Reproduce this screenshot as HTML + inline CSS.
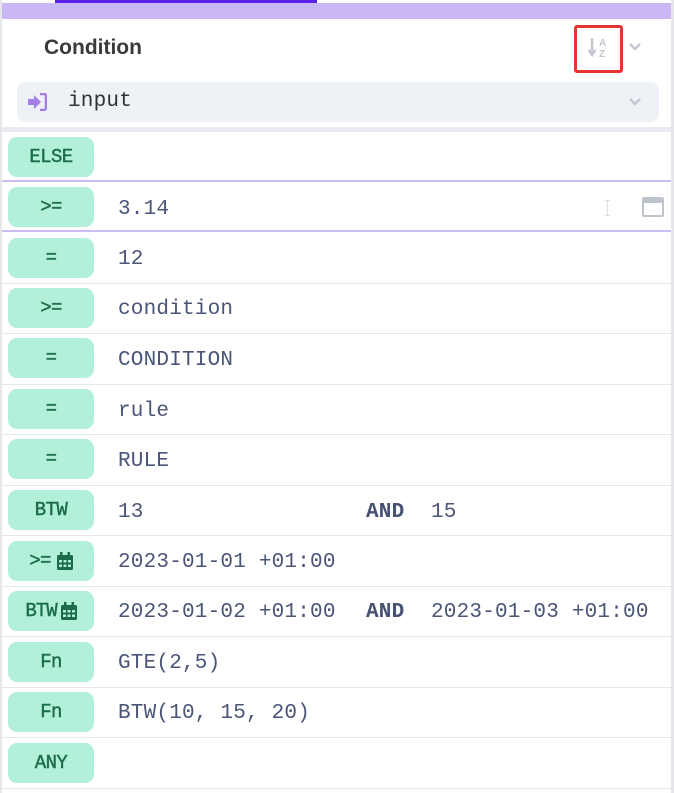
<!DOCTYPE html>
<html><head><style>
*{margin:0;padding:0;box-sizing:border-box}
body{width:674px;height:793px;background:#fff;position:relative;overflow:hidden;font-family:"Liberation Sans",sans-serif}
.frame{position:absolute;left:0;top:0;width:674px;height:793px;border-left:2px solid #e5e7eb;border-right:3px solid #e5e7eb}
.topbar{position:absolute;left:55px;top:0;width:262px;height:3px;background:#5b21e6}
.lav{position:absolute;left:2px;top:3px;width:669px;height:16px;background:#c9b8f5}
.title{position:absolute;left:44px;top:36px;font-size:21px;font-weight:bold;color:#3a3a3a}
.sortbox{position:absolute;left:574px;top:25px;width:49px;height:48px;border:3px solid #e53535;border-radius:3px}
.sel{position:absolute;left:17px;top:82px;width:642px;height:40px;background:#eef1f6;border-radius:8px}
.sep{position:absolute;left:2px;top:127px;width:669px;height:5px;background:#e8ebf0}
.row{position:absolute;left:2px;width:669px;border-bottom:1px solid #e5e7eb}
.pill{position:absolute;left:6px;width:86px;height:40px;background:#b2f0d9;border-radius:9px;color:#1b6b4c;font-family:"Liberation Mono",monospace;font-size:19px;letter-spacing:-0.6px;display:flex;align-items:center;justify-content:center;-webkit-text-stroke:0.4px #1b6b4c}
.v{position:absolute;font-family:"Liberation Mono",monospace;font-size:21px;color:#4a5578;letter-spacing:0.2px;white-space:pre;margin-top:2px}
.and{font-weight:bold;color:#465070}
</style></head><body>
<div class="frame"></div>
<div class="topbar"></div>
<div class="lav"></div>
<div class="title">Condition</div>
<div class="sortbox"></div>
<svg style="position:absolute;left:588px;top:36px" width="22" height="24" viewBox="0 0 22 24"><path d="M4 2v16M0.5 14l3.5 5 3.5-5" stroke="#c4c8cf" stroke-width="2.5" fill="none"/><text x="11" y="10" font-size="10" font-weight="bold" fill="#c4c8cf" font-family="Liberation Sans">A</text><text x="11" y="21" font-size="10" font-weight="bold" fill="#c4c8cf" font-family="Liberation Sans">Z</text></svg>
<svg style="position:absolute;left:628px;top:42px" width="14" height="10"><path d="M2 2l5 5 5-5" stroke="#c4c8cf" stroke-width="2.5" fill="none"/></svg>
<div class="sel"></div>
<svg style="position:absolute;left:27px;top:93px" width="20" height="18" viewBox="0 0 20 18"><path d="M1 6h6V2l7 7-7 7v-4H1z" fill="#a47de8"/><path d="M13 1h4a2 2 0 0 1 2 2v12a2 2 0 0 1-2 2h-4" stroke="#a47de8" stroke-width="2.5" fill="none"/></svg>
<div class="v" style="left:68px;top:88px;color:#333">input</div>
<svg style="position:absolute;left:628px;top:97px" width="14" height="10"><path d="M2 2l5 5 5-5" stroke="#c4c8cf" stroke-width="2.5" fill="none"/></svg>
<div class="sep"></div>

<div class="row" style="top:132px;height:50px;border-bottom:2px solid #cbbdf3"><div class="pill" style="top:5px">ELSE</div></div>
<div class="row" style="top:184px;height:48px;border-bottom:2px solid #cbbdf3"><div class="pill" style="top:3px">&gt;=</div><div class="v" style="left:116px;top:12px">3.14</div>
<div style="position:absolute;left:603px;top:16px;width:5px;height:16px;border:1px solid #ddd;border-left:none;border-right:none"></div><div style="position:absolute;left:605px;top:16px;width:1px;height:16px;background:#e0e0e0"></div>
<div style="position:absolute;left:640px;top:13px;width:22px;height:20px;border:2px solid #bfc3ca;border-top-width:6px;border-radius:2px"></div></div>

<div class="row" style="top:233px;height:51px"><div class="pill" style="top:5px">=</div><div class="v" style="left:116px;top:13px">12</div></div>
<div class="row" style="top:284px;height:50px"><div class="pill" style="top:4px">&gt;=</div><div class="v" style="left:116px;top:12px">condition</div></div>
<div class="row" style="top:334px;height:51px"><div class="pill" style="top:4px">=</div><div class="v" style="left:116px;top:13px">CONDITION</div></div>
<div class="row" style="top:385px;height:50px"><div class="pill" style="top:4px">=</div><div class="v" style="left:116px;top:13px">rule</div></div>
<div class="row" style="top:435px;height:51px"><div class="pill" style="top:4px">=</div><div class="v" style="left:116px;top:13px">RULE</div></div>
<div class="row" style="top:486px;height:50px"><div class="pill" style="top:4px">BTW</div><div class="v" style="left:116px;top:13px">13</div><div class="v and" style="left:364px;top:13px">AND</div><div class="v" style="left:429px;top:13px">15</div></div>
<div class="row" style="top:536px;height:51px"><div class="pill" style="top:5px">&gt;=<svg width="16" height="18" viewBox="0 0 16 18" style="margin-left:6px"><rect x="0" y="3" width="16" height="15" rx="1.5" fill="#1b6b4c"/><rect x="3" y="0" width="2.5" height="4" fill="#1b6b4c"/><rect x="10.5" y="0" width="2.5" height="4" fill="#1b6b4c"/><g fill="#b2f0d9"><rect x="2" y="8" width="3" height="2.5"/><rect x="6.5" y="8" width="3" height="2.5"/><rect x="11" y="8" width="3" height="2.5"/><rect x="2" y="12.5" width="3" height="2.5"/><rect x="6.5" y="12.5" width="3" height="2.5"/><rect x="11" y="12.5" width="3" height="2.5"/></g></svg></div><div class="v" style="left:116px;top:13px">2023-01-01 +01:00</div></div>
<div class="row" style="top:587px;height:50px"><div class="pill" style="top:4px;letter-spacing:-1px">BTW<svg width="16" height="18" viewBox="0 0 16 18" style="margin-left:4px"><rect x="0" y="3" width="16" height="15" rx="1.5" fill="#1b6b4c"/><rect x="3" y="0" width="2.5" height="4" fill="#1b6b4c"/><rect x="10.5" y="0" width="2.5" height="4" fill="#1b6b4c"/><g fill="#b2f0d9"><rect x="2" y="8" width="3" height="2.5"/><rect x="6.5" y="8" width="3" height="2.5"/><rect x="11" y="8" width="3" height="2.5"/><rect x="2" y="12.5" width="3" height="2.5"/><rect x="6.5" y="12.5" width="3" height="2.5"/><rect x="11" y="12.5" width="3" height="2.5"/></g></svg></div><div class="v" style="left:116px;top:12px">2023-01-02 +01:00</div><div class="v and" style="left:364px;top:12px">AND</div><div class="v" style="left:429px;top:12px">2023-01-03 +01:00</div></div>
<div class="row" style="top:637px;height:51px"><div class="pill" style="top:5px">Fn</div><div class="v" style="left:116px;top:13px">GTE(2,5)</div></div>
<div class="row" style="top:688px;height:50px"><div class="pill" style="top:4px">Fn</div><div class="v" style="left:116px;top:12px">BTW(10, 15, 20)</div></div>
<div class="row" style="top:738px;height:51px"><div class="pill" style="top:5px">ANY</div></div>
</body></html>
